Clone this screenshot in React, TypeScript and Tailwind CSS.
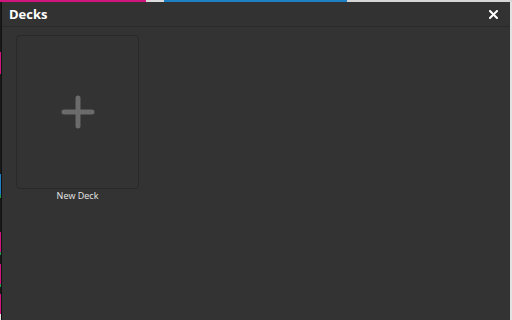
const leftSegments: { h: number; color: string }[] = [
  { h: 50, color: 'bg-[#1a1a1a]' },
  { h: 22, color: 'bg-[#d0157e]' },
  { h: 100, color: 'bg-[#1a1a1a]' },
  { h: 21, color: 'bg-[#1d7fc4]' },
  { h: 3, color: 'bg-[#1a9a4a]' },
  { h: 34, color: 'bg-[#1a1a1a]' },
  { h: 20, color: 'bg-[#d0157e]' },
  { h: 3, color: 'bg-[#1a9a4a]' },
  { h: 9, color: 'bg-[#1a1a1a]' },
  { h: 20, color: 'bg-[#d0157e]' },
  { h: 3, color: 'bg-[#1a9a4a]' },
  { h: 7, color: 'bg-[#1a1a1a]' },
  { h: 20, color: 'bg-[#d0157e]' },
  { h: 8, color: 'bg-[#e0e0e0]' },
];

function NewDeckCard() {
  return (
    <div className="flex flex-col items-center w-[123px]">
      <div className="w-[123px] h-[154px] rounded-[4px] border border-[#292929] bg-[#333333] flex items-center justify-center">
        <svg width="34" height="34" viewBox="0 0 34 34">
          <path d="M17 3v28M3 17h28" stroke="#6b6b6b" strokeWidth="5" strokeLinecap="round" />
        </svg>
      </div>
      <span className="mt-[1px] text-[9px] leading-[12px] text-[#e8e8e8] font-['Open_Sans',sans-serif]">
        New Deck
      </span>
    </div>
  );
}

export default function App() {
  return (
    <div className="relative w-[512px] h-[320px] overflow-hidden bg-[#e2e2e2]">
      {/* page behind the dialog */}
      <div className="flex h-[2px]">
        <div className="w-[146px] bg-[#d0157e]" />
        <div className="w-[18px] bg-[#dcdcdc]" />
        <div className="w-[183px] bg-[#1d7fc4]" />
        <div className="flex-1 bg-[#d6d6d6]" />
      </div>
      <div className="flex flex-col w-[2px]">
        {leftSegments.map((s, i) => (
          <div key={i} className={s.color} style={{ height: s.h }} />
        ))}
      </div>

      {/* dialog */}
      <div className="absolute left-[1px] top-[2px] right-[2px] bottom-0 border-l border-[#111] bg-[#333333] flex flex-col">
        <div className="h-[25px] shrink-0 flex items-center justify-between pl-[7px] pr-[12px] border-b border-[#2a2a2a] bg-[#323232]">
          <h1 className="text-[13px] font-bold text-white font-['Open_Sans',sans-serif] leading-none">
            Decks
          </h1>
          <svg width="9" height="9" viewBox="0 0 9 9">
            <path d="M1 1l7 7M8 1L1 8" stroke="#ffffff" strokeWidth="2" strokeLinecap="square" />
          </svg>
        </div>
        <div className="flex flex-wrap gap-3 pl-[14px] pt-[8px]">
          <NewDeckCard />
        </div>
      </div>
    </div>
  );
}
